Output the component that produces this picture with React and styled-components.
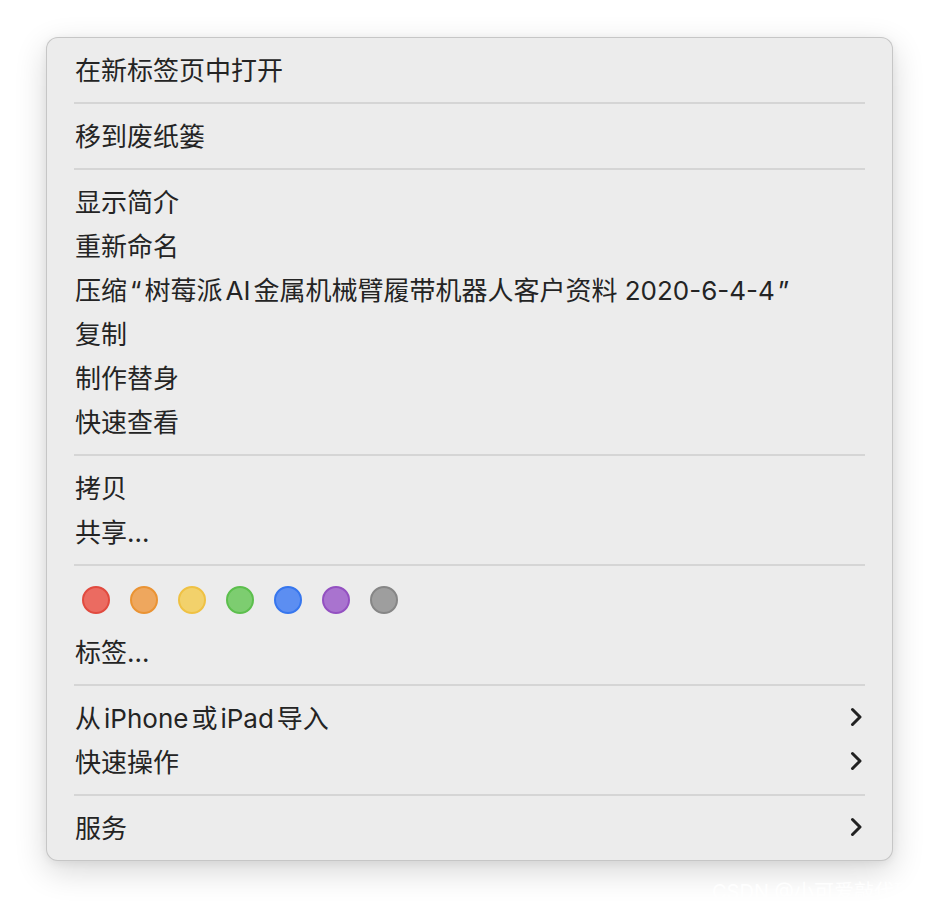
import React from 'react'
import styled, { createGlobalStyle } from 'styled-components'

const GlobalStyle = createGlobalStyle`
  html, body {
    margin: 0;
    padding: 0;
    background: #ffffff;
  }
  body {
    font-family: Inter, "Noto Sans CJK SC", sans-serif;
    -webkit-font-smoothing: antialiased;
  }
`

const Page = styled.div`
  position: relative;
  width: 938px;
  height: 914px;
  padding: 37px 0 0 46px;
  box-sizing: border-box;
  overflow: hidden;
`

const Menu = styled.div`
  width: 847px;
  box-sizing: border-box;
  background: #ececec;
  border: 1px solid rgba(0, 0, 0, 0.16);
  border-radius: 12px;
  padding: 10px 0;
  box-shadow: 0 10px 32px rgba(0, 0, 0, 0.16), 0 2px 8px rgba(0, 0, 0, 0.06);
`

const Item = styled.div`
  height: 44px;
  box-sizing: border-box;
  display: flex;
  align-items: center;
  justify-content: space-between;
  padding: 0 30px 3px 28px;
  font-size: 26px;
  color: #242424;
  white-space: nowrap;
`

const Latin = styled.span`
  margin: 0 3px;
`

const Separator = styled.div`
  height: 22px;
  display: flex;
  align-items: center;
  padding: 0 27px;
  &::after {
    content: '';
    flex: 1;
    height: 2px;
    background: #d5d5d5;
  }
`

const ColorRow = styled.div`
  display: flex;
  gap: 20px;
  padding: 10px 35px 16px;
`

const Dot = styled.span`
  width: 28px;
  height: 28px;
  box-sizing: border-box;
  border-radius: 50%;
  background: ${p => p.fill};
  border: 2px solid ${p => p.edge};
`

const Watermark = styled.div`
  position: absolute;
  left: 712px;
  top: 876px;
  font-size: 20px;
  color: rgba(255, 255, 255, 0.9);
  white-space: nowrap;
`

const Chevron = () => (
  <svg width="12" height="20" viewBox="0 0 12 20">
    <path d="M2.5 2.5 L10 10 L2.5 17.5" fill="none" stroke="#222" strokeWidth="3" strokeLinecap="round" strokeLinejoin="round" />
  </svg>
)

const colors = [
  { fill: '#eb6b61', edge: '#e14a3f' },
  { fill: '#eea75e', edge: '#ea9333' },
  { fill: '#f2d16b', edge: '#efc143' },
  { fill: '#7dcd70', edge: '#5cbf4d' },
  { fill: '#5c8ef1', edge: '#3676ee' },
  { fill: '#a973cf', edge: '#9350c1' },
  { fill: '#9e9e9e', edge: '#868686' },
]

const groups = [
  ['在新标签页中打开'],
  ['移到废纸篓'],
  [
    '显示简介',
    '重新命名',
    <>压缩<Latin>“</Latin>树莓派<Latin>AI</Latin>金属机械臂履带机器人客户资料 2020-6-4-4<Latin>”</Latin></>,
    '复制',
    '制作替身',
    '快速查看',
  ],
  ['拷贝', '共享…'],
]

export default function App() {
  return (
    <Page>
      <GlobalStyle />
      <Menu>
        {groups.map((g, i) => (
          <React.Fragment key={i}>
            {g.map((label, j) => <Item key={j}><span>{label}</span></Item>)}
            <Separator />
          </React.Fragment>
        ))}
        <ColorRow>
          {colors.map(c => <Dot key={c.fill} fill={c.fill} edge={c.edge} />)}
        </ColorRow>
        <Item>标签…</Item>
        <Separator />
        <Item><span>从<Latin>iPhone</Latin>或<Latin>iPad</Latin>导入</span><Chevron /></Item>
        <Item>快速操作<Chevron /></Item>
        <Separator />
        <Item>服务<Chevron /></Item>
      </Menu>
      <Watermark>CSDN @小可爱敲代码</Watermark>
    </Page>
  )
}
